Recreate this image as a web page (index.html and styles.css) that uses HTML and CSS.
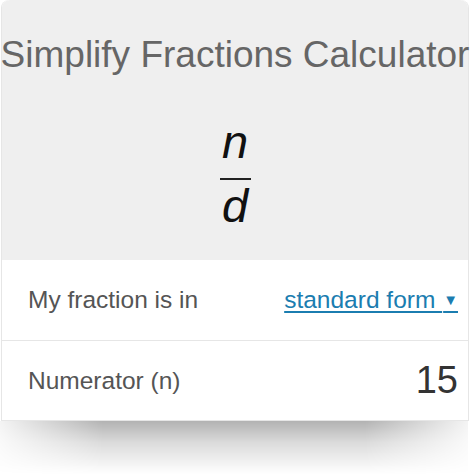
FILE: index.html
```html
<!DOCTYPE html>
<html lang="en">
<head>
    <meta charset="UTF-8">
    <meta name="viewport" content="width=device-width, initial-scale=1.0">
    <title>Simplify Fractions Calculator</title>
    <link rel="stylesheet" href="styles.css">
</head>
<body>
    <div class="calculator">
        <div class="header">
            <h1>Simplify Fractions Calculator</h1>
            <div class="fraction">
                <span class="num">n</span>
                <span class="bar"></span>
                <span class="den">d</span>
            </div>
        </div>
        <div class="row">
            <span class="label">My fraction is in</span>
            <a href="#" class="select">standard form <span class="arrow">&#9660;</span></a>
        </div>
        <div class="row">
            <span class="label">Numerator (n)</span>
            <span class="value">15</span>
        </div>
    </div>
    <div class="card-shadow"></div>
</body>
</html>
```

FILE: styles.css
```css
body {
    margin: 0;
    background-color: #ffffff;
    font-family: "Liberation Sans", Arial, sans-serif;
}
.calculator {
    width: 466px;
    margin-left: 1px;
    border: 1px solid #e6e6e6;
    border-top: none;
    border-radius: 8px 8px 0 0;
    background-color: #ffffff;
}
.header {
    height: 260px;
    background-color: #efefef;
    border-radius: 8px 8px 0 0;
    display: flex;
    flex-direction: column;
    align-items: center;
}
h1 {
    margin: 34px 0 0;
    font-size: 37px;
    font-weight: normal;
    color: #666666;
    white-space: nowrap;
    line-height: 42px;
}
.fraction {
    margin-top: 44px;
    display: flex;
    flex-direction: column;
    align-items: center;
    font-style: italic;
    font-size: 47px;
    color: #111111;
}
.num, .den {
    line-height: 44px;
}
.bar {
    width: 31px;
    height: 2px;
    background-color: #222222;
    margin: 14px 0 4px;
}
.row {
    height: 79px;
    display: flex;
    align-items: center;
    justify-content: space-between;
    padding: 0 10px 0 26px;
    border-top: 1px solid #e6e6e6;
}
.header + .row {
    border-top: none;
    height: 80px;
}
.label {
    font-size: 24.5px;
    color: #555555;
}
.select {
    font-size: 24.5px;
    color: #1b7db0;
    text-decoration: underline;
    text-underline-offset: 3px;
}
.arrow {
    font-size: 15px;
    vertical-align: 3px;
    margin-left: 1px;
}
.value {
    font-size: 38px;
    color: #333333;
}
/* soft shadow under the card */
.card-shadow {
    width: 468px;
    height: 54px;
    background: linear-gradient(to bottom, rgba(0, 0, 0, 0.3), rgba(0, 0, 0, 0.14) 40%, rgba(0, 0, 0, 0.03) 85%, rgba(0, 0, 0, 0));
    -webkit-mask-image: linear-gradient(to right, rgba(0, 0, 0, 0.15), #000 22%, #000 78%, rgba(0, 0, 0, 0.15));
    mask-image: linear-gradient(to right, rgba(0, 0, 0, 0.15), #000 22%, #000 78%, rgba(0, 0, 0, 0.15));
}
```
